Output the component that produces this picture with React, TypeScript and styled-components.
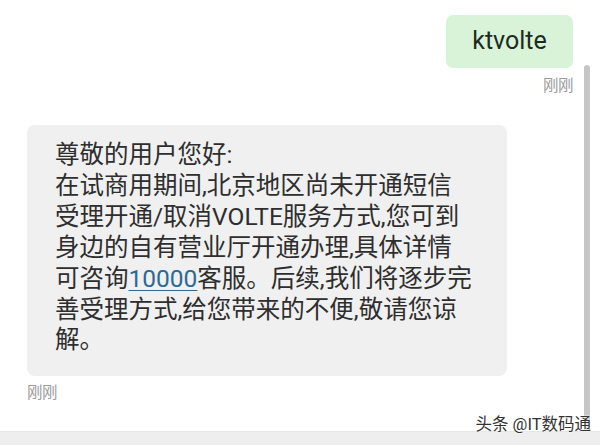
import styled, { createGlobalStyle } from 'styled-components';

const GlobalStyle = createGlobalStyle`
  html, body {
    margin: 0;
    padding: 0;
    background: #ffffff;
  }
`;

const lines = [
  ['尊敬的用户您好:'],
  ['在试商用期间,北京地区尚未开通短信'],
  ['受理开通/取消VOLTE服务方式,您可到'],
  ['身边的自有营业厅开通办理,具体详情'],
  ['可咨询', '10000', '客服。后续,我们将逐步完'],
  ['善受理方式,给您带来的不便,敬请您谅'],
  ['解。'],
];

export default function App() {
  return (
    <>
      <GlobalStyle />
      <Page>
        <ChatArea>
          <OutgoingRow>
            <SentBubble>ktvolte</SentBubble>
          </OutgoingRow>
          <TimeStamp align="right">刚刚</TimeStamp>
          <IncomingRow>
            <ReceivedBubble>
              {lines.map((line, index) => (
                <Line key={index}>
                  {line.length === 3 ? (
                    <>
                      {line[0]}
                      <PhoneLink>{line[1]}</PhoneLink>
                      {line[2]}
                    </>
                  ) : (
                    line[0]
                  )}
                </Line>
              ))}
            </ReceivedBubble>
          </IncomingRow>
          <TimeStamp align="left">刚刚</TimeStamp>
        </ChatArea>
        <BottomBar />
        <ScrollThumb />
        <Watermark>头条 @IT数码通</Watermark>
      </Page>
    </>
  );
}

const Page = styled.div`
  position: relative;
  width: 600px;
  height: 445px;
  overflow: hidden;
  display: flex;
  flex-direction: column;
  background: #ffffff;
  font-family: Roboto, 'Noto Sans CJK SC', sans-serif;
`;

const ChatArea = styled.div`
  flex: 1;
  display: flex;
  flex-direction: column;
  padding: 15px 27px 0 27px;
`;

const OutgoingRow = styled.div`
  display: flex;
  justify-content: flex-end;
`;

const SentBubble = styled.div`
  width: 127px;
  height: 53px;
  box-sizing: border-box;
  display: flex;
  align-items: center;
  justify-content: center;
  background: #d9f3d9;
  border-radius: 7px;
  font-size: 25px;
  color: #1d2b1f;
  padding-bottom: 2px;
`;

const TimeStamp = styled.div<{ align: 'left' | 'right' }>`
  align-self: ${(p) => (p.align === 'right' ? 'flex-end' : 'flex-start')};
  margin-top: ${(p) => (p.align === 'right' ? '9px' : '8px')};
  font-size: 15.5px;
  line-height: 18px;
  color: #9a9a9a;
  letter-spacing: -0.5px;
`;

const IncomingRow = styled.div`
  display: flex;
  margin-top: 30px;
`;

const ReceivedBubble = styled.div`
  width: 480px;
  box-sizing: border-box;
  padding: 15px 20px 20px 28px;
  background: #f0f0f0;
  border-radius: 8px;
  font-size: 24.5px;
  line-height: 30.9px;
  color: #2e2e2e;
`;

const Line = styled.div`
  white-space: nowrap;
`;

const PhoneLink = styled.span`
  color: #2b6a96;
  text-decoration: underline;
  text-decoration-thickness: 1px;
  text-underline-offset: 3px;
`;

const BottomBar = styled.div`
  height: 13px;
  background: #eeeeee;
  border-top: 1px solid #e6e6e6;
`;

const ScrollThumb = styled.div`
  position: absolute;
  top: 65px;
  right: 10px;
  width: 6px;
  height: 366px;
  background: #c6c6c6;
  border-radius: 3px 3px 0 0;
`;

const Watermark = styled.div`
  position: absolute;
  right: 9px;
  bottom: 11px;
  font-size: 16.5px;
  line-height: 19px;
  color: #333333;
  text-shadow: 0 0 2px #ffffff, 0 0 2px #ffffff;
  letter-spacing: 0;
`;
